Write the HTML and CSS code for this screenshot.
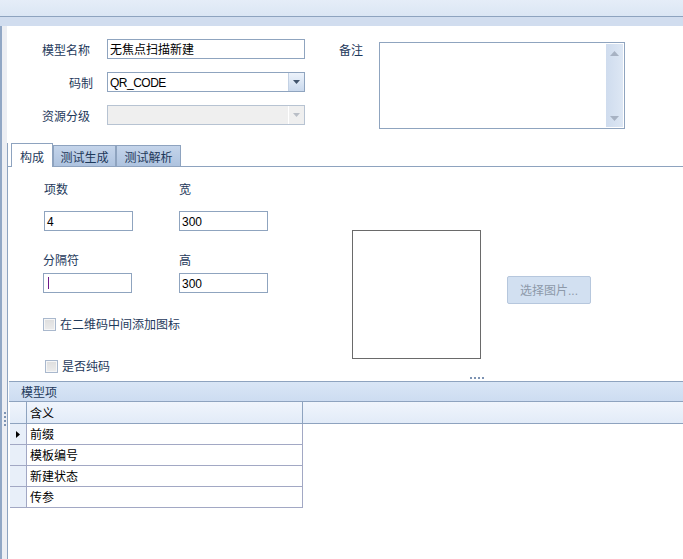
FILE: index.html
```html
<!DOCTYPE html>
<html>
<head>
<meta charset="utf-8">
<title>模型</title>
<link rel="stylesheet" href="styles.css">
</head>
<body>
<div class="window">
  <div class="titlebar"></div>
  <div class="band"></div>
  <div class="main">
    <div class="edge">
      <div class="vgrip"><i></i><i></i><i></i><i></i></div>
    </div>
    <div class="content">
      <div class="header-form">
        <div class="fields">
          <div class="row">
            <span class="lbl">模型名称</span>
            <div class="edit">无焦点扫描新建</div>
          </div>
          <div class="row">
            <span class="lbl lbl-r">码制</span>
            <div class="combo">
              <span class="val latin">QR_CODE</span>
              <span class="cbtn"><svg width="7" height="4" viewBox="0 0 7 4"><polygon points="0,0 7,0 3.5,4" fill="#41546c"/></svg></span>
            </div>
          </div>
          <div class="row">
            <span class="lbl">资源分级</span>
            <div class="combo disabled">
              <span class="val"></span>
              <span class="cbtn"><svg width="7" height="4" viewBox="0 0 7 4"><polygon points="0,0 7,0 3.5,4" fill="#b9bec6"/></svg></span>
            </div>
          </div>
        </div>
        <div class="remark">
          <span class="lbl-note">备注</span>
          <div class="memo">
            <div class="memo-text"></div>
            <div class="vscroll">
              <svg width="9" height="5" viewBox="0 0 9 5"><polygon points="0,5 9,5 4.5,0" fill="#a7b2c3"/></svg>
              <svg width="9" height="5" viewBox="0 0 9 5"><polygon points="0,0 9,0 4.5,5" fill="#a7b2c3"/></svg>
            </div>
          </div>
        </div>
      </div>
      <div class="tabctl">
        <div class="tabstrip">
          <div class="tab active">构成</div>
          <div class="tab inactive w1">测试生成</div>
          <div class="tab inactive w2">测试解析</div>
        </div>
        <div class="tabpanel">
          <div class="tabbody">
            <div class="form2">
              <div class="pair labels">
                <span class="c1 shift">项数</span>
                <span class="c2">宽</span>
              </div>
              <div class="pair inputs1">
                <div class="c1"><div class="edit small shift latin">4</div></div>
                <div class="c2"><div class="edit small latin">300</div></div>
              </div>
              <div class="pair labels2">
                <span class="c1">分隔符</span>
                <span class="c2">高</span>
              </div>
              <div class="pair inputs2">
                <div class="c1"><div class="edit small"><span class="caret"></span></div></div>
                <div class="c2"><div class="edit small latin">300</div></div>
              </div>
              <div class="check check1"><span class="box"></span><span class="ctext">在二维码中间添加图标</span></div>
              <div class="check check2"><span class="box"></span><span class="ctext">是否纯码</span></div>
            </div>
            <div class="picture"></div>
            <div class="pickbtn">选择图片...</div>
          </div>
          <div class="hgrip"><i></i><i></i><i></i><i></i></div>
          <div class="group">
            <div class="group-head">模型项</div>
            <div class="grid">
              <div class="ghead">
                <div class="ind"></div>
                <div class="col">含义</div>
                <div class="rest"></div>
              </div>
              <div class="grow">
                <div class="ind"><svg width="4" height="7" viewBox="0 0 4 7"><polygon points="0,0 4,3.5 0,7" fill="#000"/></svg></div>
                <div class="col">前缀</div>
              </div>
              <div class="grow">
                <div class="ind"></div>
                <div class="col">模板编号</div>
              </div>
              <div class="grow">
                <div class="ind"></div>
                <div class="col">新建状态</div>
              </div>
              <div class="grow">
                <div class="ind"></div>
                <div class="col">传参</div>
              </div>
            </div>
          </div>
        </div>
      </div>
    </div>
  </div>
</div>
</body>
</html>
```
FILE: styles.css
```css
* { box-sizing: border-box; }
html, body { margin: 0; padding: 0; }
body {
  width: 683px;
  height: 559px;
  overflow: hidden;
  background: #fff;
  font-family: "Liberation Sans", "Noto Sans CJK SC", sans-serif;
  font-size: 12px;
  color: #1e395b;
}
.window { width: 683px; height: 559px; display: flex; flex-direction: column; }
.titlebar {
  height: 17px;
  flex: none;
  background: linear-gradient(#e5edf8, #dbe6f4);
  border-bottom: 1px solid #8ea3bf;
}
.band { height: 9px; flex: none; background: #d1ddef; }
.main { flex: 1; display: flex; min-height: 0; }

.edge {
  width: 7px;
  flex: none;
  background: #eceef3;
  border-left: 2px solid #91a7c5;
  padding-top: 386px;
}
.vgrip { display: flex; flex-direction: column; gap: 2px; margin-left: 2px; }
.vgrip i, .hgrip i { display: block; width: 2px; height: 2px; background: #7d93b3; }

.content { flex: 1; display: flex; flex-direction: column; min-width: 0; }

/* header form */
.header-form { height: 117px; flex: none; display: flex; align-items: flex-start; }
.fields { padding-top: 13px; display: flex; flex-direction: column; gap: 13px; }
.row { display: flex; align-items: flex-start; height: 20px; }
.lbl { width: 51px; margin-left: 35px; padding-top: 2px; line-height: 20px; white-space: nowrap; }
.lbl-r { text-align: right; }
.edit {
  width: 198px;
  height: 20px;
  margin-left: 14px;
  border: 1px solid #8fa4bf;
  background: #fff;
  color: #000;
  padding: 1px 2px 0;
  line-height: 18px;
  white-space: nowrap;
  overflow: hidden;
}
.latin { font-family: "Liberation Sans", sans-serif; }
.val.latin { font-size: 12px; letter-spacing: -0.5px; }
.combo {
  width: 198px;
  height: 20px;
  margin-left: 14px;
  border: 1px solid #8fa4bf;
  background: #fff;
  color: #000;
  display: flex;
}
.combo .val { flex: 1; padding: 1px 2px 0; line-height: 18px; }
.cbtn {
  width: 16px;
  flex: none;
  border-left: 1px solid #c3d1e4;
  background: linear-gradient(#edf3fb, #cad9ed);
  display: flex;
  align-items: center;
  justify-content: center;
}
.combo.disabled { background: #efefef; border-color: #b7c3d2; }
.combo.disabled .cbtn { background: #efefef; border-left-color: #ffffff; }

.remark { display: flex; align-items: flex-start; margin-left: 34px; }
.lbl-note { margin-top: 15px; line-height: 20px; white-space: nowrap; }
.memo {
  width: 246px;
  height: 87px;
  margin-left: 16px;
  margin-top: 16px;
  border: 1px solid #8fa4bf;
  background: #fff;
  padding: 1px;
  display: flex;
}
.memo-text { flex: 1; }
.vscroll {
  width: 17px;
  background: linear-gradient(90deg, #cfdcee, #dde7f4);
  display: flex;
  flex-direction: column;
  align-items: center;
  justify-content: space-between;
  padding: 7px 0 6px;
}

/* tabs */
.tabctl {
  flex: 1;
  display: flex;
  flex-direction: column;
  border-left: 1px solid #8ea3bf;
  min-height: 0;
}
.tabstrip {
  height: 24px;
  flex: none;
  display: flex;
  align-items: flex-end;
  padding-left: 3px;
  border-bottom: 1px solid #8ea3bf;
}
.tab {
  border: 1px solid #8ea3bf;
  border-bottom: none;
  line-height: 14px;
  text-align: center;
  white-space: nowrap;
}
.tab.active {
  width: 42px;
  height: 24px;
  margin-bottom: -1px;
  padding-top: 7px;
  background: #fff;
  position: relative;
  z-index: 1;
}
.tab.inactive {
  height: 21px;
  padding-top: 5px;
  background: linear-gradient(#c4d4ea, #aec3df);
}
.tab.w1 { width: 63px; }
.tab.w2 { width: 65px; }

.tabpanel { flex: 1; display: flex; flex-direction: column; min-height: 0; }
.tabbody { height: 209px; flex: none; display: flex; align-items: flex-start; }
.form2 { width: 260px; flex: none; padding-left: 35px; padding-top: 16px; }
.pair { display: flex; }
.pair .c1 { width: 136px; flex: none; }
.labels, .labels2 { line-height: 14px; height: 14px; }
.labels2 { margin-top: 23px; }
.shift { padding-left: 1px; }
.inputs1 { margin-top: 14px; }
.inputs2 { margin-top: 5px; }
.edit.small { width: 89px; margin-left: 0; }
.edit.small.shift { margin-left: 1px; padding-left: 2px; }
.caret {
  display: inline-block;
  width: 1px;
  height: 12px;
  margin-left: 2px;
  margin-top: 2px;
  vertical-align: top;
  background: #6d1a8a;
}
.check { display: flex; align-items: center; height: 14px; line-height: 14px; }
.check1 { margin-top: 24px; }
.check2 { margin-top: 28px; margin-left: 2px; }
.box {
  width: 13px;
  height: 13px;
  flex: none;
  border: 1px solid #a9b8cd;
  background: linear-gradient(#dedede, #ececec);
  box-shadow: inset 0 0 0 1px #f6f6f6;
}
.ctext { margin-left: 4px; padding-top: 2px; white-space: nowrap; }

.picture {
  width: 129px;
  height: 129px;
  flex: none;
  margin-left: 84px;
  margin-top: 63px;
  border: 1px solid #6a6a6a;
}
.pickbtn {
  width: 84px;
  height: 28px;
  flex: none;
  margin-left: 26px;
  margin-top: 109px;
  border: 1px solid #b6c7dd;
  border-radius: 2px;
  background: #d2e0f1;
  color: #8d99a9;
  text-align: center;
  padding-top: 1px;
  line-height: 26px;
  white-space: nowrap;
}

.hgrip { height: 5px; flex: none; display: flex; gap: 2px; padding-left: 462px; padding-top: 1px; }

/* group / grid */
.group { flex: 1; margin-left: 1px; display: flex; flex-direction: column; min-height: 0; }
.group-head {
  height: 21px;
  flex: none;
  border-top: 1px solid #8ea3bf;
  border-bottom: 1px solid #8ea3bf;
  background: linear-gradient(#d9e6f6, #cddcf1);
  padding-left: 12px;
  padding-top: 3px;
  line-height: 17px;
}
.grid { flex: 1; padding-left: 1px; color: #000; }
.ghead {
  height: 22px;
  display: flex;
  border-bottom: 1px solid #8ea3bf;
  background: linear-gradient(#f0f5fc, #e2ebf8);
}
.ghead .ind { width: 17px; border-right: 1px solid #8ea3bf; }
.ghead .col { width: 276px; border-right: 1px solid #8ea3bf; padding-left: 3px; padding-top: 3px; line-height: 18px; }
.ghead .rest { flex: 1; }
.grow { height: 21px; display: flex; }
.grow .ind {
  width: 17px;
  border-right: 1px solid #a2a8c4;
  border-bottom: 1px solid #a2a8c4;
  background: #e8eff9;
  display: flex;
  align-items: center;
  justify-content: center;
}
.grow .col {
  width: 276px;
  border-right: 1px solid #a2a8c4;
  border-bottom: 1px solid #a2a8c4;
  padding-left: 3px;
  padding-top: 2px;
  line-height: 18px;
}
```
